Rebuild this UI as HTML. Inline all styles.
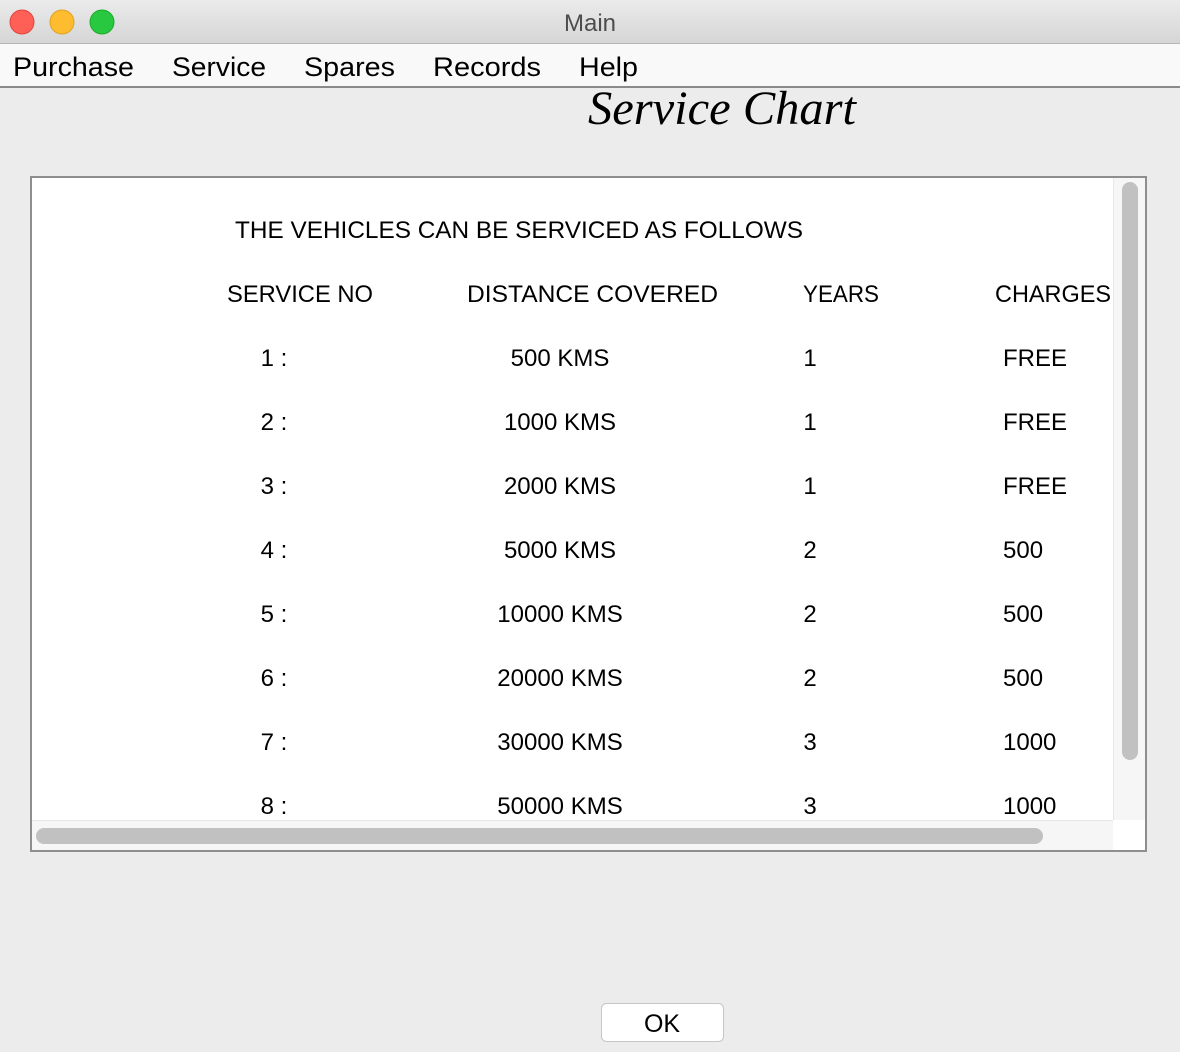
<!DOCTYPE html>
<html><head><meta charset="utf-8"><style>
html,body{margin:0;padding:0;background:#ececec;width:1180px;height:1052px;overflow:hidden}
svg{display:block}
text{font-family:"Liberation Sans",sans-serif;fill:#000}
</style></head><body>
<svg width="1180" height="1052" xmlns="http://www.w3.org/2000/svg">
<defs><linearGradient id="tb" x1="0" y1="0" x2="0" y2="1"><stop offset="0" stop-color="#ebebeb"/><stop offset="1" stop-color="#d5d5d5"/></linearGradient></defs>
<rect width="1180" height="1052" fill="#ececec"/>
<rect width="1180" height="44" fill="url(#tb)"/>
<rect y="43" width="1180" height="1" fill="#b5b5b5"/>
<circle cx="22" cy="22" r="12" fill="#fe5f57" stroke="#e0443e"/>
<circle cx="62" cy="22" r="12" fill="#febc2e" stroke="#dea123"/>
<circle cx="102" cy="22" r="12" fill="#28c840" stroke="#1aab29"/>
<text x="590" y="31" font-size="24" fill="#4d4d4d" text-anchor="middle" style="fill:#4d4d4d">Main</text>
<rect y="44" width="1180" height="43" fill="#f9f9f9"/>
<rect y="86" width="1180" height="2" fill="#8a8a8a"/>
<g font-size="27">
<text x="13" y="76" textLength="121" lengthAdjust="spacingAndGlyphs">Purchase</text>
<text x="172" y="76" textLength="94" lengthAdjust="spacingAndGlyphs">Service</text>
<text x="304" y="76" textLength="91" lengthAdjust="spacingAndGlyphs">Spares</text>
<text x="433" y="76" textLength="108" lengthAdjust="spacingAndGlyphs">Records</text>
<text x="579" y="76" textLength="59" lengthAdjust="spacingAndGlyphs">Help</text>
</g>
<text x="588" y="124" font-size="48" font-style="italic" style="font-family:'Liberation Serif',serif" textLength="268" lengthAdjust="spacingAndGlyphs">Service Chart</text>
<rect x="31" y="177" width="1115" height="674" fill="#fff" stroke="#8e8e8e" stroke-width="2"/>
<rect x="1113" y="178" width="32" height="642" fill="#f6f6f6"/>
<rect x="1113" y="178" width="1" height="642" fill="#e8e8e8"/>
<rect x="1122" y="182" width="16" height="578" rx="8" fill="#c1c1c1"/>
<rect x="32" y="820" width="1081" height="30" fill="#f6f6f6"/>
<rect x="32" y="820" width="1081" height="1" fill="#e8e8e8"/>
<rect x="36" y="828" width="1007" height="16" rx="8" fill="#c1c1c1"/>
<g font-size="24">
<text x="235" y="238" textLength="568" lengthAdjust="spacingAndGlyphs">THE VEHICLES CAN BE SERVICED AS FOLLOWS</text>
<text x="227" y="302" textLength="146" lengthAdjust="spacingAndGlyphs">SERVICE NO</text>
<text x="467" y="302" textLength="251" lengthAdjust="spacingAndGlyphs">DISTANCE COVERED</text>
<text x="803" y="302" textLength="76" lengthAdjust="spacingAndGlyphs">YEARS</text>
<text x="995" y="302" textLength="116" lengthAdjust="spacingAndGlyphs">CHARGES</text>
<g text-anchor="middle">
<text x="274" y="366">1 :</text><text x="560" y="366">500 KMS</text><text x="810" y="366">1</text>
<text x="274" y="430">2 :</text><text x="560" y="430">1000 KMS</text><text x="810" y="430">1</text>
<text x="274" y="494">3 :</text><text x="560" y="494">2000 KMS</text><text x="810" y="494">1</text>
<text x="274" y="558">4 :</text><text x="560" y="558">5000 KMS</text><text x="810" y="558">2</text>
<text x="274" y="622">5 :</text><text x="560" y="622">10000 KMS</text><text x="810" y="622">2</text>
<text x="274" y="686">6 :</text><text x="560" y="686">20000 KMS</text><text x="810" y="686">2</text>
<text x="274" y="750">7 :</text><text x="560" y="750">30000 KMS</text><text x="810" y="750">3</text>
<text x="274" y="814">8 :</text><text x="560" y="814">50000 KMS</text><text x="810" y="814">3</text>
</g>
<text x="1003" y="366">FREE</text><text x="1003" y="430">FREE</text><text x="1003" y="494">FREE</text>
<text x="1003" y="558">500</text><text x="1003" y="622">500</text><text x="1003" y="686">500</text>
<text x="1003" y="750">1000</text><text x="1003" y="814">1000</text>
</g>
<rect x="32" y="821" width="1081" height="0" fill="none"/>
<rect x="601.5" y="1003.5" width="122" height="38" rx="5" fill="#fff" stroke="#c6c6c6"/>
<text x="662" y="1032" font-size="25" text-anchor="middle">OK</text>
</svg>
</body></html>
